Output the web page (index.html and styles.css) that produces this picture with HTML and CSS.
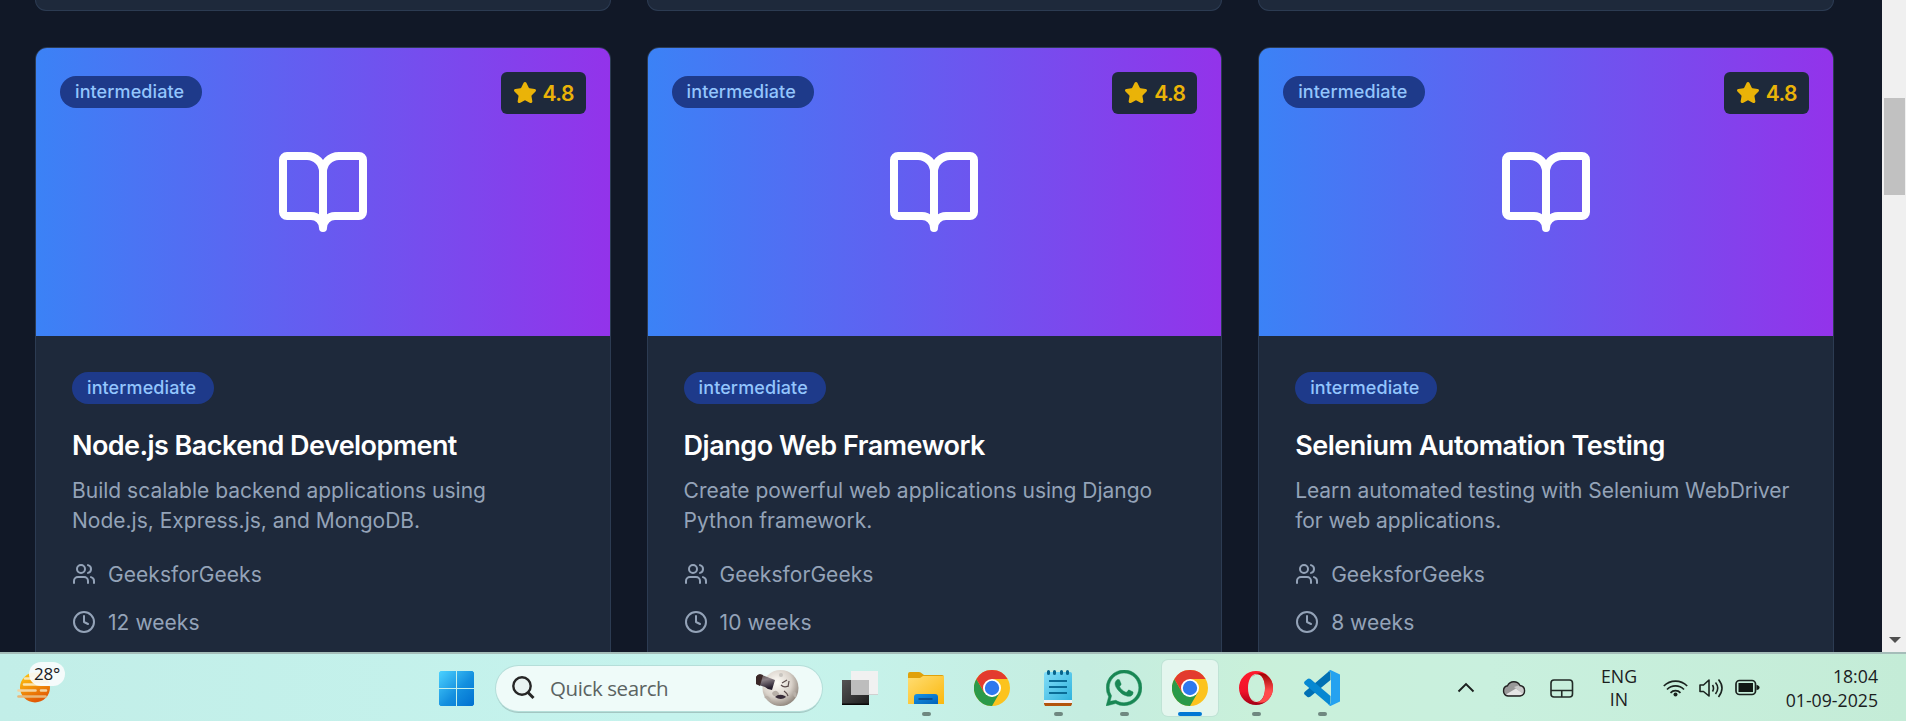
FILE: index.html
```
<!DOCTYPE html>
<html lang="en">
<head>
<meta charset="utf-8">
<title>Courses</title>
<link rel="stylesheet" href="styles.css">
</head>
<body>
<svg class="defs" width="0" height="0">
  <defs>
    <linearGradient id="win" x1="0" y1="0" x2="1" y2="1"><stop offset="0" stop-color="#4cd2ff"/><stop offset=".55" stop-color="#1490df"/><stop offset="1" stop-color="#0070d0"/></linearGradient>
    <linearGradient id="sun" x1="0" y1="0" x2=".4" y2="1"><stop offset="0" stop-color="#fdca13"/><stop offset=".45" stop-color="#f59e0b"/><stop offset="1" stop-color="#e25a05"/></linearGradient>
    <radialGradient id="moon" cx=".4" cy=".35" r=".68"><stop offset="0" stop-color="#fffdf8"/><stop offset=".6" stop-color="#d9d2ca"/><stop offset="1" stop-color="#8f857c"/></radialGradient>
    <linearGradient id="scope" x1="0" y1="0" x2=".3" y2="1"><stop offset="0" stop-color="#54423f"/><stop offset=".45" stop-color="#8a8086"/><stop offset="1" stop-color="#251c2b"/></linearGradient>
    <linearGradient id="dark" x1="0" y1="0" x2="1" y2="1"><stop offset="0" stop-color="#555"/><stop offset="1" stop-color="#1e1e1e"/></linearGradient>
    <linearGradient id="folder" x1="0" y1="0" x2="1" y2="1"><stop offset="0" stop-color="#ffdd73"/><stop offset="1" stop-color="#fbb80d"/></linearGradient>
    <linearGradient id="tray" x1="0" y1="0" x2="1" y2="1"><stop offset="0" stop-color="#1793e6"/><stop offset="1" stop-color="#0462b8"/></linearGradient>
    <linearGradient id="pad" x1="0" y1="0" x2="1" y2="1"><stop offset="0" stop-color="#83def8"/><stop offset="1" stop-color="#30b3dd"/></linearGradient>
    <linearGradient id="operaA" x1="0" y1="0" x2="0" y2="1"><stop offset="0" stop-color="#ff1b2d"/><stop offset=".6" stop-color="#f0142a"/><stop offset="1" stop-color="#a20015"/></linearGradient>
    <linearGradient id="operaB" x1="0" y1="0" x2="0" y2="1"><stop offset="0" stop-color="#9c0000"/><stop offset=".6" stop-color="#ff4b4b"/><stop offset="1" stop-color="#ff4b4b"/></linearGradient>
  </defs>
  <symbol id="book" viewBox="0 0 24 24"><path d="M12 7v14M3 18a1 1 0 0 1-1-1V4a1 1 0 0 1 1-1h5a4 4 0 0 1 4 4 4 4 0 0 1 4-4h5a1 1 0 0 1 1 1v13a1 1 0 0 1-1 1h-6a3 3 0 0 0-3 3 3 3 0 0 0-3-3z"/></symbol>
  <symbol id="star" viewBox="0 0 24 24"><path d="M11.525 2.295a.53.53 0 0 1 .95 0l2.31 4.679a2.123 2.123 0 0 0 1.595 1.16l5.166.756a.53.53 0 0 1 .294.904l-3.736 3.638a2.123 2.123 0 0 0-.611 1.878l.882 5.14a.53.53 0 0 1-.771.56l-4.618-2.428a2.122 2.122 0 0 0-1.973 0L6.396 21.01a.53.53 0 0 1-.77-.56l.881-5.139a2.122 2.122 0 0 0-.611-1.879L2.16 9.795a.53.53 0 0 1 .294-.906l5.165-.755a2.122 2.122 0 0 0 1.597-1.16z"/></symbol>
  <symbol id="users" viewBox="0 0 24 24"><path d="M16 21v-2a4 4 0 0 0-4-4H6a4 4 0 0 0-4 4v2"/><circle cx="9" cy="7" r="4"/><path d="M22 21v-2a4 4 0 0 0-3-3.87M16 3.13a4 4 0 0 1 0 7.75"/></symbol>
  <symbol id="clock" viewBox="0 0 24 24"><circle cx="12" cy="12" r="10"/><path d="M12 6v6l4 2"/></symbol>
  <symbol id="chrome" viewBox="0 0 36 36">
    <circle cx="18" cy="18" r="18" fill="#fcc31e"/>
    <path d="M2.41 9 10.2 22.500 18 27l7.800-4.500L18 36A18 18 0 0 1 2.410 9z" fill="#2a9a49"/>
    <path d="M2.41 9A18 18 0 0 1 33.590 9H18l-7.800 13.500z" fill="#e33b2e"/>
    <circle cx="18" cy="18" r="9" fill="#fff"/><circle cx="18" cy="18" r="7.2" fill="#2f78ee"/>
  </symbol>
</svg>

<div class="browser">
  <main class="page">
    <div class="grid grid-prev"><div class="card card-prev"></div><div class="card card-prev"></div><div class="card card-prev"></div></div>
    <div class="grid">
      <article class="card">
        <div class="hero"><span class="pill">intermediate</span><svg class="book"><use href="#book"/></svg><span class="rating"><svg class="star"><use href="#star"/></svg>4.8</span></div>
        <div class="body">
          <span class="pill">intermediate</span>
          <h3 class="title title-wide">Node.js Backend Development</h3>
          <p class="desc">Build scalable backend applications using<br>Node.js, Express.js, and MongoDB.</p>
          <div class="meta"><svg class="icon"><use href="#users"/></svg>GeeksforGeeks</div>
          <div class="meta"><svg class="icon"><use href="#clock"/></svg>12 weeks</div>
        </div>
      </article>
      <article class="card">
        <div class="hero"><span class="pill">intermediate</span><svg class="book"><use href="#book"/></svg><span class="rating"><svg class="star"><use href="#star"/></svg>4.8</span></div>
        <div class="body">
          <span class="pill">intermediate</span>
          <h3 class="title">Django Web Framework</h3>
          <p class="desc">Create powerful web applications using Django<br>Python framework.</p>
          <div class="meta"><svg class="icon"><use href="#users"/></svg>GeeksforGeeks</div>
          <div class="meta"><svg class="icon"><use href="#clock"/></svg>10 weeks</div>
        </div>
      </article>
      <article class="card">
        <div class="hero"><span class="pill">intermediate</span><svg class="book"><use href="#book"/></svg><span class="rating"><svg class="star"><use href="#star"/></svg>4.8</span></div>
        <div class="body">
          <span class="pill">intermediate</span>
          <h3 class="title">Selenium Automation Testing</h3>
          <p class="desc desc-tight">Learn automated testing with Selenium WebDriver<br>for web applications.</p>
          <div class="meta"><svg class="icon"><use href="#users"/></svg>GeeksforGeeks</div>
          <div class="meta"><svg class="icon"><use href="#clock"/></svg>8 weeks</div>
        </div>
      </article>
    </div>
  </main>
  <div class="scrollbar"><div class="thumb"></div><svg class="down" width="12" height="6"><path d="M0 0h12L6 6z" fill="#505050"/></svg></div>
</div>

<footer class="taskbar">
  <div class="weather">
    <svg width="35" height="32" viewBox="0 0 35 32"><circle cx="18" cy="15.500" r="15" fill="url(#sun)"/><g stroke="#f3d3a0" stroke-width="2.600" stroke-linecap="round"><path d="M8 6.500h10M7 12.500h25" stroke="#fbe6ae"/><path d="M1.500 18.500h17M24 18.500h5"/><path d="M1.500 24.500h27" stroke="#e9b777"/></g></svg>
    <span class="temp">28°</span>
  </div>
  <div class="apps">
    <svg class="start" width="35" height="35"><path d="M1.500 0H17v17H0V1.500zM18 0h15.500L35 1.500V17H18zM0 18h17v17H1.500L0 33.500zM18 18h17v15.500L33.500 35H18z" fill="url(#win)"/></svg>
    <div class="search">
      <svg width="24" height="24" fill="none" stroke="#262626" stroke-width="2.400"><circle cx="10" cy="10" r="8.700" fill="#e9f3f2"/><path d="m16 16.500 5.500 5.500" stroke-width="3"/></svg>
      <span class="query">Quick search</span>
      <svg class="moon" width="44" height="38" viewBox="0 0 44 38"><circle cx="25.500" cy="19" r="18" fill="url(#moon)"/><circle cx="26" cy="6" r="2" fill="#c8c4bf"/><path d="M17 24q3-4 6-1t-1 4-5-3zM38 22q5 1 3 7-4-2-3-7zM9 28q4-3 7 3l-2 1z" fill="#b8b0a8"/><path d="M1 8Q3 4 7 6l13 5-3 10q-4 0-7-3L1 15z" fill="url(#scope)"/><path d="M1 8Q3 4 8 6L5 17 1 15z" fill="#3a2728"/><path d="M20 28q4-4 10-1l1 1q-5 4-11 0z" fill="#372b38"/><path d="M26 16q3 3 7 1M27 14l5-3M29 22q3 2 4 5M34 12l-1 6" fill="none" stroke="#5b4c4c" stroke-width="1.200"/></svg>
    </div>
    <div class="app"><svg width="36" height="36"><path d="M0 10h27v24.500H0z" fill="url(#dark)"/><path d="M0 33.500h27V35H0z" fill="#090909"/><path d="M9 1h27v24H9z" fill="#f1f1f1"/><path d="M9 10h18v15H9z" fill="#bdbdbd"/><path d="M9 24.500h27" stroke="#bbb" opacity=".6"/></svg></div>
    <div class="app running"><svg width="36" height="36"><path d="M0 4q0-2 2-2h9q2 0 3 1.500l2 1.500h18q2 0 2 2v10H0z" fill="#e0a10b"/><path d="M0 8h12l3-2h21v28H0z" fill="url(#folder)"/><path d="M6 34V27q0-3 3-3h18q3 0 3 3v7z" fill="url(#tray)"/><path d="M10.500 29h14" stroke="#0d4a86" stroke-width="1.700"/></svg></div>
    <div class="app"><svg width="36" height="36"><use href="#chrome"/></svg></div>
    <div class="app running"><svg width="36" height="36"><path d="M4 31h28v3l-1 2H5l-1-2z" fill="#b3540c"/><path d="M4 29h28v4H4z" fill="#f2f1f3"/><path d="M6 2h24q2 0 2 2v26H4V4q0-2 2-2z" fill="url(#pad)"/><path d="M9 11h18M9 17h18M9 23h18" stroke="#0a6c96" stroke-width="2"/><path d="M8.500 1.500v2M14.500 1.500v2M21.500 1.500v2M27.500 1.500v2" stroke="#07648c" stroke-width="3" stroke-linecap="round"/></svg></div>
    <div class="app running"><svg width="36" height="36" viewBox="0 0 24 24" fill="#198754" stroke="#198754" stroke-width=".3"><path d="M.057 24l1.687-6.163a11.867 11.867 0 0 1-1.587-5.946C.16 5.335 5.495 0 12.05 0a11.817 11.817 0 0 1 8.413 3.488 11.824 11.824 0 0 1 3.48 8.414c-.003 6.557-5.338 11.892-11.893 11.892a11.9 11.9 0 0 1-5.688-1.448zM6.600 20.193c1.676.995 3.276 1.591 5.392 1.592 5.448 0 9.886-4.434 9.889-9.885.002-5.462-4.415-9.890-9.881-9.892-5.452 0-9.887 4.434-9.889 9.884a9.800 9.800 0 0 0 1.599 5.350l-.999 3.648z"/><path d="M17.500 14.380c-.3-.15-1.760-.870-2.030-.970-.27-.1-.47-.15-.67.15-.2.3-.77.970-.940 1.160-.17.2-.35.220-.650.080-.3-.15-1.250-.460-2.390-1.480-.88-.79-1.480-1.760-1.650-2.060-.17-.3-.02-.460.130-.610.130-.130.3-.35.450-.520.15-.17.2-.3.3-.5.1-.2.050-.37-.03-.520-.07-.15-.67-1.610-.920-2.210-.24-.580-.490-.5-.67-.510h-.570c-.2 0-.520.070-.790.370s-1.040 1.020-1.040 2.480 1.070 2.880 1.210 3.070c.15.2 2.100 3.200 5.080 4.490 2.470.970 2.980.78 3.520.73.540-.05 1.760-.720 2.010-1.410.25-.690.25-1.290.170-1.410-.07-.13-.27-.2-.570-.350z"/></svg></div>
    <div class="app running active"><svg width="36" height="36"><use href="#chrome"/></svg></div>
    <div class="app running"><svg width="36" height="36"><path fill-rule="evenodd" d="M18 1a17 17 0 1 0 0 34 17 17 0 1 0 0-34zM18.500 4c5 0 8.500 6 8.500 14s-3.500 14-8.500 14S10 26 10 18 13.500 4 18.500 4z" fill="url(#operaA)"/><path d="M13.500 7.500Q17 3 21 4.500c4 1.500 6 7 6 13.500s-2 12-6 13.500q-4 1.500-7.500-3Q20 35 28 31.500q7-5 7-13.500T28 4.500Q20 1 13.500 7.500z" fill="url(#operaB)"/></svg></div>
    <div class="app running"><svg width="36" height="36"><path d="M26.500 0v10L6.500 26.500q-1.500 1.300-3 .5L.8 24.700q-1.500-1.500 0-3z" fill="#0070b4"/><path d="M.8 14.300q-1.500-1.500 0-3l2.700-2.400q1.500-1 3 .2L26.500 26v10z" fill="#0788d2"/><path d="M26.500 0 36 4.500v27L26.500 36 24 34.500l3-1v-31l-3-1z" fill="#25a2f0"/></svg></div>
  </div>
  <div class="tray">
    <svg class="chev" width="18" height="11" fill="none" stroke="#1b201e" stroke-width="1.900"><path d="m1.500 9.500 7.500-7.500 7.500 7.500"/></svg>
    <svg class="cloud" width="24" height="18"><path d="M6 17a5.200 5.200 0 0 1-.5-10.200A7 7 0 0 1 18 6.500a5.300 5.300 0 0 1 0 10.500z" fill="#999"/><path d="M3 16 14 9.500 22 15l-4 1.500H6z" fill="#e6e6e6"/><path d="m12 8 6-2q5 1 5 6l-2 3z" fill="#c9c9c9"/><path d="M6 17a5.200 5.200 0 0 1-.5-10.200A7 7 0 0 1 18 6.500a5.300 5.300 0 0 1 0 10.500z" fill="none" stroke="#222" stroke-width="1.400"/></svg>
    <svg class="touch" width="24" height="19" fill="none" stroke="#222b27" stroke-width="1.600"><rect x="1" y="1" width="21.500" height="17" rx="3"/><path d="M1 11.500h21.500M11.750 11.500V18"/></svg>
    <div class="lang">ENG<br>IN</div>
    <svg class="wifi" width="25" height="18" fill="none" stroke="#1b231f" stroke-width="1.700"><path d="M.8 7a16.500 16.500 0 0 1 23.400 0M4 10.500a12 12 0 0 1 17 0M7.500 13.800a7 7 0 0 1 10 0"/><circle cx="12.500" cy="15.600" r="2" fill="#1b231f" stroke="none"/></svg>
    <svg class="sound" width="25" height="20" fill="none" stroke="#1b231f" stroke-width="1.600" stroke-linejoin="round"><path d="M1 7v6.500h3.500L10 18V2L4.500 7zM13.500 7q2 3.200 0 6.500M16.500 4.500q4.500 5.500 0 11.500M19.500 1.500q7 8.500 0 17.500"/></svg>
    <svg class="battery" width="25" height="17"><rect x="1" y="1.500" width="19.500" height="14" rx="3.500" fill="none" stroke="#1b231f" stroke-width="1.700"/><path d="M3.500 4H18v9H3.500z" fill="#111814"/><path d="M21.500 6q3 .5 3 2.500t-3 2.500z" fill="#111814"/></svg>
    <div class="time">18:04<br>01-09-2025</div>
  </div>
</footer>
</body>
</html>
```
FILE: styles.css
```
* { box-sizing: border-box; }
body { margin: 0; width: 1906px; height: 721px; overflow: hidden; background: #111827; font-family: Inter, sans-serif; }
svg { display: block; flex: none; }
.defs { position: absolute; }

.browser { display: flex; height: 652px; overflow: hidden; }
.page { flex: 1; padding: 0 48.3px 0 35px; background: #111827; }
.grid { display: grid; grid-template-columns: repeat(3, 1fr); gap: 36px; }
.grid-prev { margin-bottom: 36px; }
.card { height: 760px; overflow: hidden; background: #1e293b; border: 1px solid #2c3b52; border-radius: 12px; }
.card-prev { height: 11px; border-top: 0; border-radius: 0 0 12px 12px; }

.hero { display: grid; grid-template-columns: 1fr 96px 1fr; height: 288px; padding: 24px; background: linear-gradient(90deg, #3b82f6, #9333ea); }
.hero .pill { justify-self: start; margin-top: 4px; }
.pill { display: inline-flex; align-items: center; width: 142px; height: 32px; padding-left: 15px; border-radius: 16px; background: #1e3a8a; color: #93c5fd; font-size: 18px; font-weight: 500; line-height: 24px; letter-spacing: .1px; }
.book { width: 96px; height: 96px; align-self: center; fill: none; stroke: #fff; stroke-width: 2; stroke-linecap: round; stroke-linejoin: round; }
.rating { justify-self: end; display: flex; align-items: center; gap: 6px; width: 85px; height: 42px; padding-left: 12px; border-radius: 6px; background: #1e293b; color: #eab308; font-size: 21px; font-weight: 600; letter-spacing: -.5px; }
.star { width: 24px; height: 24px; fill: #eab308; stroke: #eab308; stroke-width: 2; stroke-linejoin: round; }

.body { padding: 36px; }
.title { margin: 24px 0 0; color: #fff; font-size: 27px; font-weight: 600; line-height: 36px; white-space: nowrap; letter-spacing: -.47px; }
.title-wide { letter-spacing: -.56px; }
.desc { margin: 12px 0 23px; color: #94a3b8; font-size: 21px; line-height: 30px; white-space: nowrap; }
.desc-tight { letter-spacing: -.05px; }
.meta { display: flex; align-items: center; gap: 12px; height: 30px; margin-bottom: 18px; color: #94a3b8; font-size: 21px; letter-spacing: .05px; }
.icon { width: 24px; height: 24px; fill: none; stroke: #94a3b8; stroke-width: 2; stroke-linecap: round; stroke-linejoin: round; }

.scrollbar { display: flex; flex-direction: column; justify-content: space-between; width: 24px; padding: 98px 1px 9px 2px; background: #f0f0f0; }
.thumb { height: 97px; background: #c1c1c1; }
.down { margin-left: 5px; }

.taskbar { display: flex; height: 69px; border-top: 2px solid #a5bdb9; background: linear-gradient(90deg, #c2eee8 0, #c5f3ed 35%, #c6f2ea 45%, #c5ede0 57%, #c9f0da 66%, #c9f0de 78%, #c4ecd7 100%); color: #1b201e; font-family: "Open Sans", "Noto Sans", sans-serif; }
.weather { position: relative; width: 439px; padding: 18px 0 0 17px; }
.temp { position: absolute; left: 29px; top: 8px; width: 36px; height: 24px; border-radius: 12px; background: rgba(250, 252, 252, .92); text-align: center; font-size: 17px; line-height: 24px; letter-spacing: -.3px; }
.apps { display: flex; width: 916px; }
.start { margin: 17px 22px 0 0; }
.search { display: flex; width: 326px; height: 45px; margin: 12px 5px 0 0; padding: 10px 20px 0 16px; border-radius: 23px; background: #effbf9; box-shadow: 0 0 0 1px #b5ded9, 0 2px 0 #a3c6c2; }
.query { margin: -2px 0 0 14px; width: 205px; color: #5b6362; font-size: 20.5px; line-height: 28px; letter-spacing: -.4px; }
.moon { margin: -7px 0 0 0; }
.app { display: flex; flex-direction: column; align-items: center; width: 56px; height: 56px; margin: 6px 5px 0; padding-top: 10px; border-radius: 6px; }
.running::after { content: ""; width: 9px; height: 5px; margin-top: 6px; border-radius: 3px; background: #6f8880; }
.active { background: #e4f6ee; box-shadow: 0 0 0 1px #bfe3d5; }
.active::after { width: 24px; background: #0078d4; }

.tray { display: flex; flex: 1; padding-left: 102px; font-size: 17.7px; line-height: 24px; }
.chev { margin: 28px 27px 0 0; }
.cloud { margin: 25px 24px 0 0; }
.touch { margin: 25px 22px 0 0; }
.lang { width: 46px; margin-top: 11px; text-align: center; line-height: 23px; }
.wifi { margin: 25px 11px 0 21px; }
.sound { margin: 24px 11px 0 0; }
.battery { margin-top: 25px; }
.time { flex: 1; padding-right: 28px; margin-top: 10px; text-align: right; }
```
